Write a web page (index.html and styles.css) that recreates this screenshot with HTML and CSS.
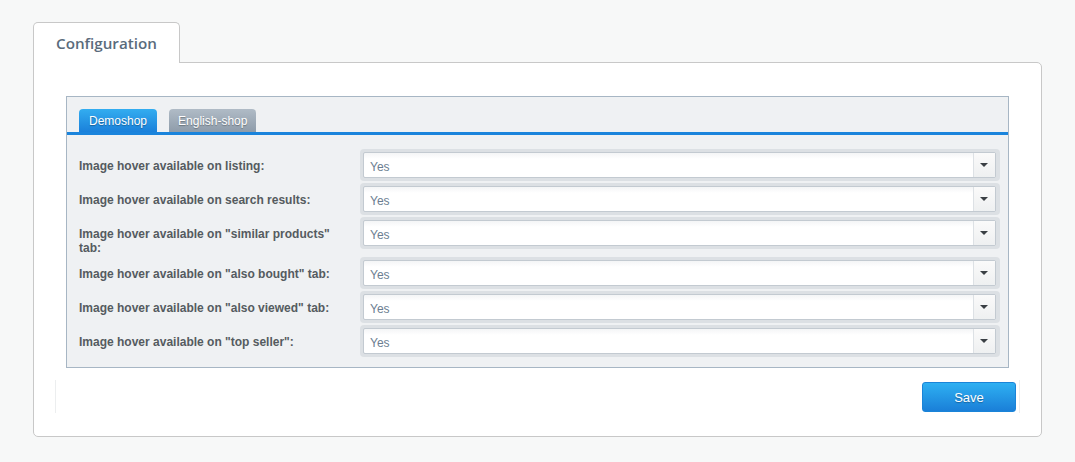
FILE: index.html
```html
<!DOCTYPE html>
<html>
<head>
<meta charset="utf-8">
<link rel="stylesheet" href="styles.css">
</head>
<body>
<div class="page">
  <div class="main-tabs">
    <div class="main-tab">Configuration</div>
  </div>
  <div class="panel">
    <div class="shop-box">
      <div class="shop-tabs">
        <div class="shop-tab active">Demoshop</div>
        <div class="shop-tab">English-shop</div>
      </div>
      <div class="rows">
        <div class="row">
          <div class="label">Image hover available on listing:</div>
          <div class="select-wrap"><div class="select"><span class="value">Yes</span><span class="arrow"></span></div></div>
        </div>
        <div class="row">
          <div class="label">Image hover available on search results:</div>
          <div class="select-wrap"><div class="select"><span class="value">Yes</span><span class="arrow"></span></div></div>
        </div>
        <div class="row">
          <div class="label">Image hover available on "similar products" tab:</div>
          <div class="select-wrap"><div class="select"><span class="value">Yes</span><span class="arrow"></span></div></div>
        </div>
        <div class="row">
          <div class="label">Image hover available on "also bought" tab:</div>
          <div class="select-wrap"><div class="select"><span class="value">Yes</span><span class="arrow"></span></div></div>
        </div>
        <div class="row">
          <div class="label">Image hover available on "also viewed" tab:</div>
          <div class="select-wrap"><div class="select"><span class="value">Yes</span><span class="arrow"></span></div></div>
        </div>
        <div class="row">
          <div class="label">Image hover available on "top seller":</div>
          <div class="select-wrap"><div class="select"><span class="value">Yes</span><span class="arrow"></span></div></div>
        </div>
      </div>
    </div>
    <div class="footer">
      <button class="save">Save</button>
    </div>
  </div>
</div>
</body>
</html>
```

FILE: styles.css
```css
html, body {
  margin: 0;
  padding: 0;
  background: #f7f8f8;
}
.page {
  padding: 22px 33px 0 33px;
  width: 1009px;
}
.main-tabs {
  display: flex;
  height: 40px;
}
.main-tab {
  box-sizing: border-box;
  width: 147px;
  height: 41px;
  background: #fff;
  border: 1px solid #c8c8c8;
  border-bottom: none;
  border-radius: 5px 5px 0 0;
  font-family: "Open Sans", sans-serif;
  font-weight: 600;
  font-size: 15.2px;
  color: #5a6b7c;
  padding: 10px 0 0 22px;
  position: relative;
  z-index: 1;
}
.panel {
  box-sizing: border-box;
  width: 1009px;
  height: 375px;
  background: #fff;
  border: 1px solid #c8c8c8;
  border-radius: 0 5px 5px 5px;
  padding: 33px 32px 0 32px;
}
.shop-box {
  box-sizing: border-box;
  height: 272px;
  background: #eff1f3;
  border: 1px solid #a7b6c4;
}
.shop-tabs {
  display: flex;
  gap: 12px;
  padding: 12px 0 0 12px;
  border-bottom: 3px solid #1a84dc;
}
.shop-tab {
  height: 23px;
  box-sizing: border-box;
  padding: 5px 9px 0 9px;
  border-radius: 4px 4px 0 0;
  background: linear-gradient(#b0bbc6, #8e9caa);
  color: #fff;
  font-family: "Liberation Sans", Arial, sans-serif;
  font-size: 12px;
  text-shadow: 0 1px 1px rgba(0,0,0,0.3);
}
.shop-tab.active {
  background: linear-gradient(#33adf0, #1a80da);
  padding: 5px 10px 0 10px;
}
.rows {
  padding: 14px 8px 0 12px;
}
.row {
  display: grid;
  grid-template-columns: 281px 1fr;
  margin-bottom: 2px;
}
.label {
  font-family: "Liberation Sans", Arial, sans-serif;
  font-weight: bold;
  font-size: 12px;
  line-height: 14px;
  color: #555b60;
  padding-top: 10px;
  padding-right: 20px;
}
.select-wrap {
  box-sizing: border-box;
  height: 32px;
  padding: 3px 4px 3px 3px;
  background: #dce0e4;
  border-radius: 4px;
}
.select {
  box-sizing: border-box;
  height: 26px;
  display: flex;
  background: linear-gradient(#f4f5f6, #fff 6px);
  border: 1px solid #c3cad1;
  border-radius: 2px;
}
.value {
  flex: 1;
  padding: 7px 0 0 6px;
  font-family: "Liberation Sans", Arial, sans-serif;
  font-size: 12px;
  color: #6b7e91;
}
.arrow {
  width: 21px;
  border-left: 1px solid #dde1e5;
  background: linear-gradient(#fafafa, #eef0f1);
  position: relative;
}
.arrow::after {
  content: "";
  position: absolute;
  left: 6px;
  top: 10px;
  border-left: 4px solid transparent;
  border-right: 4px solid transparent;
  border-top: 4px solid #3a3f44;
}
.footer {
  box-sizing: border-box;
  margin: 12px -11px 0 -11px;
  height: 33px;
  border-left: 1px solid #eceeef;
  border-right: 1px solid #eceeef;
  display: flex;
  justify-content: flex-end;
  padding: 2px 3px 0 0;
}
.save {
  width: 94px;
  height: 30px;
  border: 1px solid #1a84d8;
  border-radius: 3px;
  background: linear-gradient(#2eb0f2, #1a7fd8);
  color: #fff;
  font-family: "Liberation Sans", Arial, sans-serif;
  font-size: 13px;
  text-shadow: 0 1px 1px rgba(0,0,0,0.3);
  padding: 0;
}
```
